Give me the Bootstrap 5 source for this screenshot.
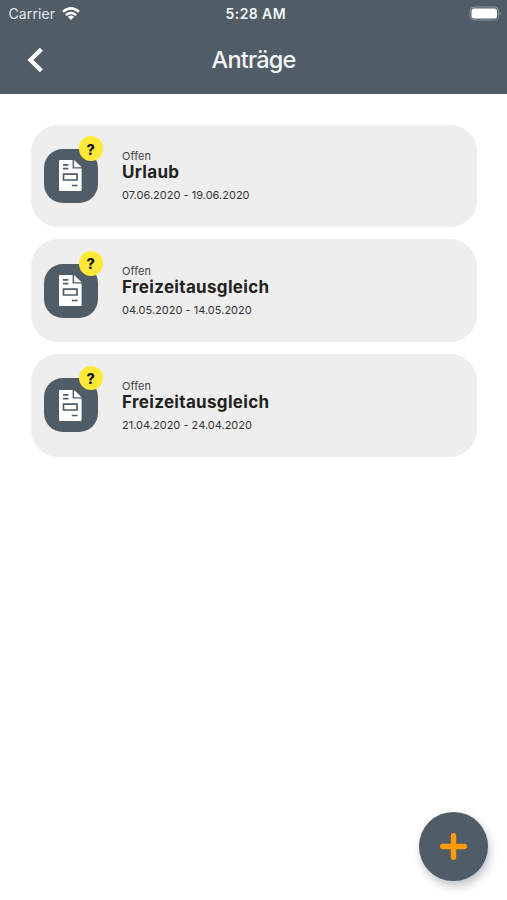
<!DOCTYPE html>
<html lang="de">
<head>
<meta charset="utf-8">
<meta name="viewport" content="width=device-width, initial-scale=1">
<title>Anträge</title>
<link href="https://cdn.jsdelivr.net/npm/bootstrap@5.3.0/dist/css/bootstrap.min.css" rel="stylesheet">
<style>
body{font-family:Inter,"Liberation Sans",sans-serif;color:#222;height:900px;overflow:hidden}
svg{display:block}
.topbar{background:#505c66;height:93.5px;color:#f2f6f9}
.status{height:28px;padding:0 5px 0 8.5px}
.status>div{flex:1 1 0}
.carrier{font-size:14px;letter-spacing:.1px;line-height:28px;color:#e3e8ec}
.wifi{margin:0 0 2px 7px}
.clock{font-size:14px;font-weight:600;letter-spacing:.4px;line-height:28px;padding-left:1px}
.titlebar{height:63px;display:grid;grid-template-columns:1fr auto 1fr;align-items:center}
.titlebar h1{font-size:23.5px;font-weight:500;letter-spacing:-.8px;line-height:30px}
.back{padding:0 0 0 27px}
.requests{padding:31px 30.5px 0 31px;gap:12.3px}
.request{height:102.5px;border-radius:27px;background:#eee;padding:0 12.5px}
.tile{width:54px;height:54px;border-radius:19px;background:#505c66}
.mark-open{width:24.5px;height:24.5px;background:#ffe936;color:#111;font-size:14.5px;font-weight:800;line-height:20px;padding-top:2px;right:-5.5px;top:-12.5px}
.info{margin-left:24.5px}
.state{font-size:11px;line-height:13px;letter-spacing:.1px;color:#444;margin-top:1px}
.kind{font-size:17px;line-height:18px;font-weight:700;letter-spacing:.32px}
.dates{font-size:11px;line-height:14px;letter-spacing:.01px;margin-top:7px;color:#333}
.fab{width:68.5px;height:68.5px;background:#505c66;right:19.5px;bottom:19.5px;box-shadow:2px 5px 8px rgba(60,70,90,.32)}
</style>
<script src="https://cdn.jsdelivr.net/npm/bootstrap@5.3.0/dist/js/bootstrap.bundle.min.js"></script>
</head>
<body class="bg-white position-relative">
<svg class="d-none"><symbol id="doc" viewBox="0 0 23 31"><path fill="#fff" d="M1 0H13.6V8.6H22.6V30Q22.6 31 21.6 31H1Q0 31 0 30V1Q0 0 1 0Z"/><path fill="#fff" d="M15.1 0L22.6 7.3H15.1Z"/><path stroke="#505c66" stroke-width="1.7" fill="none" d="M4 4.9H9.4M4 8.7H9.4M12.8 25.5H18.6M4.5 14.2H18V20H4.5Z"/></symbol></svg>
<header class="topbar">
  <div class="status d-flex align-items-center">
    <div class="d-flex align-items-center"><span class="carrier">Carrier</span>
      <svg class="wifi" width="18" height="13" viewBox="0 0 18 13" fill="none" stroke="#fff" stroke-width="2.5"><path d="M1 4.8Q9-2 17 4.8M3.8 8.1Q9 3.8 14.2 8.1"/><path fill="#fff" stroke="none" d="M5.9 9.8Q9 7.4 12.1 9.8L9 13Z"/></svg>
    </div>
    <span class="clock">5:28 AM</span>
    <div class="d-flex justify-content-end"><svg width="33" height="16" viewBox="0 0 33 16"><rect x="1" y="1" width="28.5" height="13" rx="4" fill="none" stroke="#8d98a1"/><rect x="2.5" y="2.5" width="25.5" height="10" rx="2.5" fill="#fff"/><path d="M30.8 5.5Q33 7.5 30.8 9.5Z" fill="#8d98a1"/></svg></div>
  </div>
  <div class="titlebar">
    <a class="back" href="#" aria-label="Zurück"><svg width="18" height="26" viewBox="0 0 18 26"><path d="M14.4 2.2L3.4 13L14.4 23.8" fill="none" stroke="#fff" stroke-width="4.2"/></svg></a>
    <h1 class="m-0">Anträge</h1>
  </div>
</header>
<main class="requests d-flex flex-column">
  <article class="request d-flex align-items-center">
    <div class="tile position-relative d-flex align-items-center justify-content-center"><svg width="23" height="31"><use href="#doc"/></svg><span class="mark-open position-absolute rounded-circle d-flex align-items-center justify-content-center">?</span></div>
    <div class="info"><div class="state">Offen</div><div class="kind">Urlaub</div><div class="dates">07.06.2020 - 19.06.2020</div></div>
  </article>
  <article class="request d-flex align-items-center">
    <div class="tile position-relative d-flex align-items-center justify-content-center"><svg width="23" height="31"><use href="#doc"/></svg><span class="mark-open position-absolute rounded-circle d-flex align-items-center justify-content-center">?</span></div>
    <div class="info"><div class="state">Offen</div><div class="kind">Freizeitausgleich</div><div class="dates">04.05.2020 - 14.05.2020</div></div>
  </article>
  <article class="request d-flex align-items-center">
    <div class="tile position-relative d-flex align-items-center justify-content-center"><svg width="23" height="31"><use href="#doc"/></svg><span class="mark-open position-absolute rounded-circle d-flex align-items-center justify-content-center">?</span></div>
    <div class="info"><div class="state">Offen</div><div class="kind">Freizeitausgleich</div><div class="dates">21.04.2020 - 24.04.2020</div></div>
  </article>
</main>
<button class="fab position-absolute border-0 rounded-circle p-0 d-flex align-items-center justify-content-center" aria-label="Neuer Antrag"><svg width="27" height="27" viewBox="0 0 27 27"><path d="M13.5 2.7V24.3M2.7 13.5H24.3" stroke="#ff9b05" stroke-width="5.4" stroke-linecap="round"/></svg></button>
</body>
</html>
